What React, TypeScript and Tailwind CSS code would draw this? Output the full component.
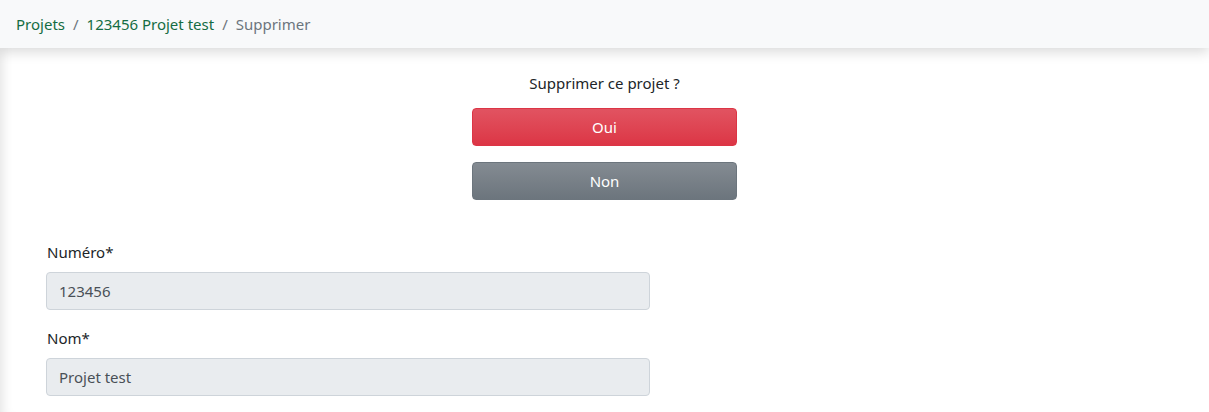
export default function App() {
  return (
    <div
      className="min-h-[412px] bg-white text-[16px] text-[#212529] shadow-[inset_12px_0_12px_-10px_rgba(0,0,0,0.12)]"
      style={{ fontFamily: '"Segoe UI", "Noto Sans", Arial, sans-serif' }}
    >
      <nav className="relative z-10 flex h-[48px] items-center bg-[#f8f9fa] px-[16px] shadow-[0_4px_12px_rgba(0,0,0,0.15)]">
        <ol className="flex items-center text-[15px]">
          <li>
            <a href="#" className="text-[#146c43]">Projets</a>
          </li>
          <li className="px-[8px] text-[#6c757d]">/</li>
          <li>
            <a href="#" className="text-[#146c43]">123456 Projet test</a>
          </li>
          <li className="px-[8px] text-[#6c757d]">/</li>
          <li className="text-[#6c757d]">Supprimer</li>
        </ol>
      </nav>

      <div className="flex flex-col items-center pt-[23px]">
        <p className="text-[15px] leading-[24px]">Supprimer ce projet ?</p>
        <button className="mt-[13px] h-[38px] w-[265px] rounded-[4px] border border-[#dc3545] bg-gradient-to-b from-[#e15361] to-[#dc3545] text-[15px] text-white">
          Oui
        </button>
        <button className="mt-[16px] h-[38px] w-[265px] rounded-[4px] border border-[#6c757d] bg-gradient-to-b from-[#848b92] to-[#6c757d] text-[15px] text-white">
          Non
        </button>
      </div>

      <form className="ml-[46px] mt-[40px] w-[604px]">
        <label className="mb-[8px] block pl-[1px] text-[15px] leading-[24px]">Numéro*</label>
        <input
          disabled
          value="123456"
          className="block h-[38px] w-full rounded-[4px] border border-[#ced4da] bg-[#e9ecef] px-[12px] text-[15px] text-[#495057]"
        />
        <label className="mb-[8px] mt-[16px] block pl-[1px] text-[15px] leading-[24px]">Nom*</label>
        <input
          disabled
          value="Projet test"
          className="block h-[38px] w-full rounded-[4px] border border-[#ced4da] bg-[#e9ecef] px-[12px] text-[15px] text-[#495057]"
        />
      </form>
    </div>
  );
}
